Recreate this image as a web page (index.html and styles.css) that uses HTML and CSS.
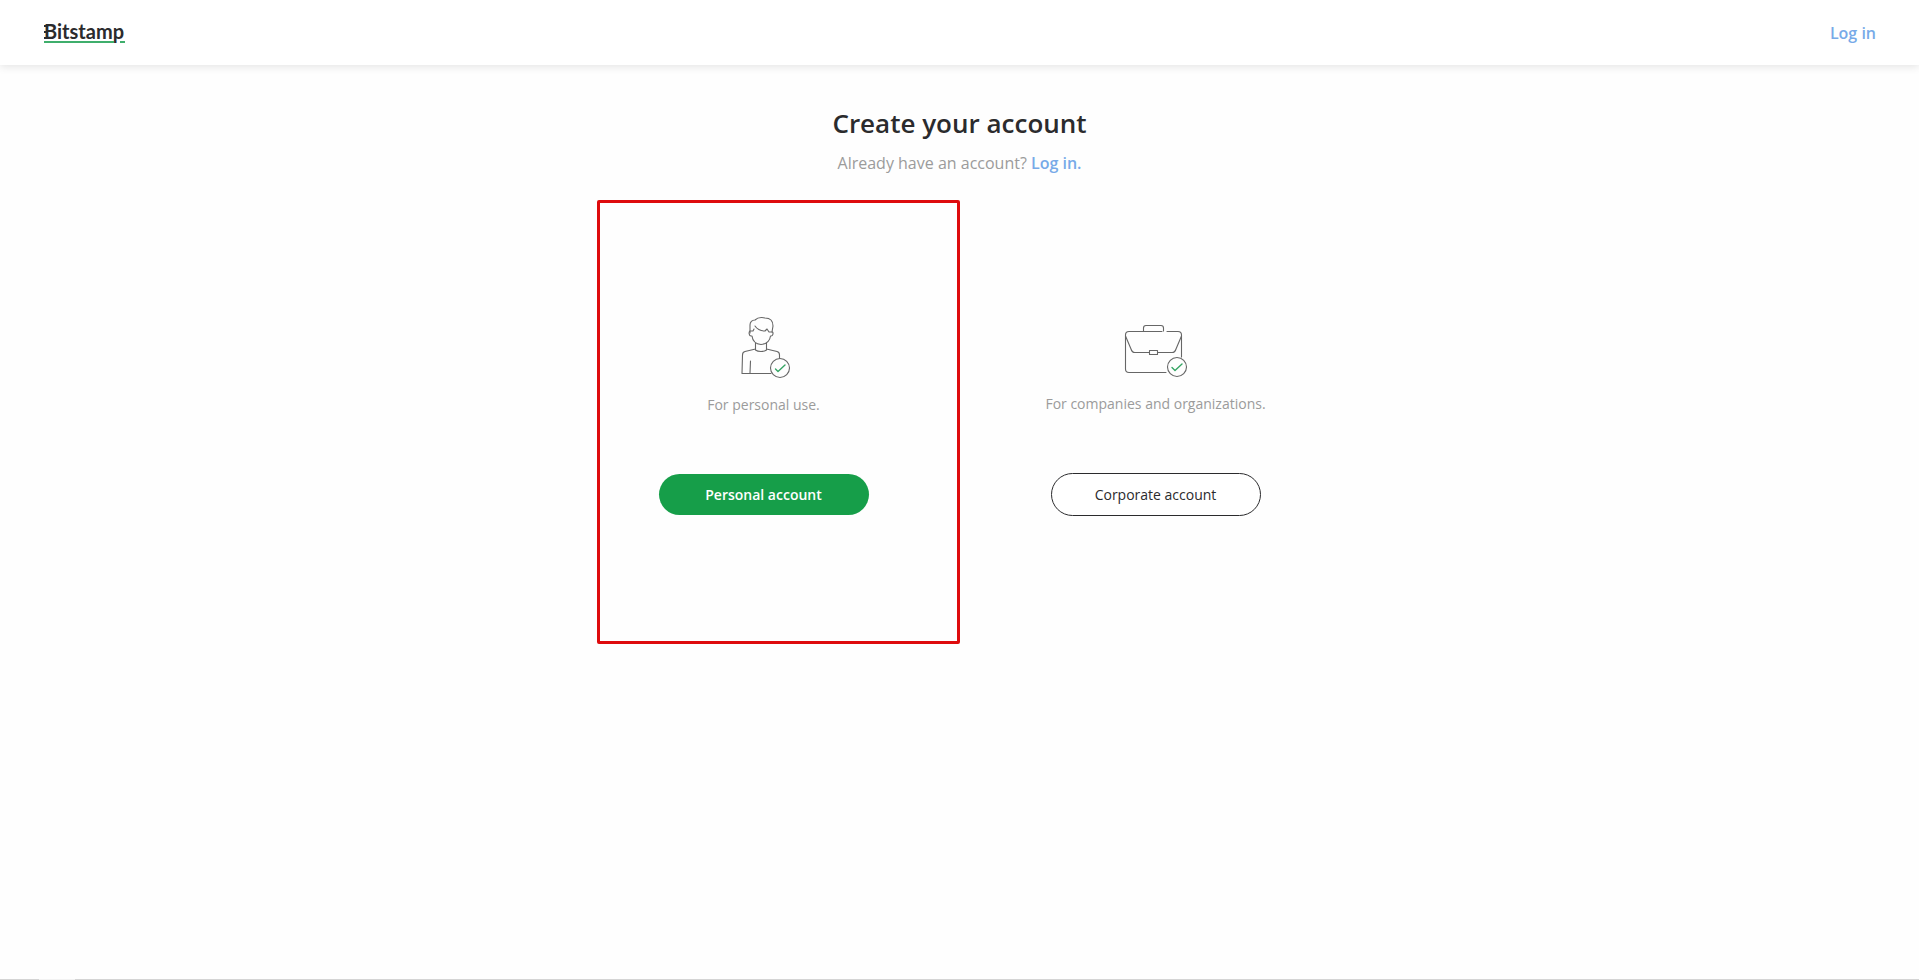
FILE: index.html
```html
<!DOCTYPE html>
<html lang="en">
<head>
<meta charset="utf-8">
<title>Create your account - Bitstamp</title>
<meta name="viewport" content="width=device-width, initial-scale=1">
<link rel="stylesheet" href="styles.css">
</head>
<body>
<header class="header">
  <a class="logo" href="#">Bitstamp
    <svg class="logo-mark" viewBox="0 0 81 20" aria-hidden="true"><path d="M0 3H3M0 9H4M0 15H3" stroke="#2b2b2d" stroke-width="2"/><path d="M0 19H70M76 19H81" stroke="#3fae6c" stroke-width="2"/></svg>
  </a>
  <a class="link" href="#">Log in</a>
</header>
<main class="main">
  <h1 class="title">Create your account</h1>
  <p class="subtitle">Already have an account? <a class="link" href="#">Log in.</a></p>
  <div class="options">
    <div class="highlight"></div>
    <section class="option">
      <svg class="icon" viewBox="0 0 60 64" fill="none" stroke="#666" stroke-width="1.100" stroke-linecap="round" stroke-linejoin="round" aria-hidden="true">
        <path d="M16 18V10C16 7 18 5 21 5C23 3 27 2 31 3C37 3 39 7 39 11L38 17"/>
        <path d="M21 11C23 14 26 16 31 16L33 14L35 17H38.500C39.500 18 39 21 37 21H36.500C36 25 33 29 27 29.500C21 29 18.500 25 18 21H17C15 21 14.500 17 16 16H19L20 14"/>
        <path d="M21.500 28V35C24 37 30 37 32.500 35V28M21.500 34L11 36.500C9 37 8.500 38 8.500 40L8 58.500H37M32.500 34L43 36.500C45 37 45.500 38 45.500 40V43M16.500 46L16 58"/>
        <circle cx="46" cy="53" r="9.500"/>
        <path d="M41.500 54L44 56.500L51 50" stroke="#35a564" stroke-width="1.400"/>
      </svg>
      <p class="note">For personal use.</p>
      <button class="button button-primary" type="button">Personal account</button>
    </section>
    <section class="option">
      <svg class="icon icon-case" viewBox="0 0 64 54" fill="none" stroke="#666" stroke-width="1.100" stroke-linecap="round" stroke-linejoin="round" aria-hidden="true">
        <path d="M42 48.500H5Q1.500 48.500 1.500 45V11Q1.500 7.500 5 7.500H38M43 7.500H54Q57.500 7.500 57.500 11V33"/>
        <path d="M19.500 7V4Q19.500 1.500 22 1.500H37Q39.500 1.500 39.500 4V7"/>
        <path d="M1.500 12L7 25Q8 28.500 11 28.500H25.500M33.500 28.500H48Q51 28.500 52 25L57.500 12"/>
        <rect x="25.500" y="26.500" width="8" height="4"/>
        <circle cx="53" cy="43" r="9.500"/>
        <path d="M48 43.500L51 46.500L58 40" stroke="#35a564" stroke-width="1.400"/>
      </svg>
      <p class="note">For companies and organizations.</p>
      <button class="button button-outline" type="button">Corporate account</button>
    </section>
  </div>
</main>
<footer class="footer"></footer>
</body>
</html>
```
FILE: styles.css
```css
* { box-sizing: border-box; }

body {
  margin: 0;
  min-height: 100vh;
  display: flex;
  flex-direction: column;
  background: #fefefe;
  color: #2b2b2d;
  font-family: "Open Sans", "Noto Sans", sans-serif;
}

.header {
  display: flex;
  align-items: center;
  justify-content: space-between;
  height: 65px;
  padding: 0 43px 0 44px;
  background: #fff;
  box-shadow: 0 2px 8px rgba(0, 0, 0, 0.1);
}

.logo {
  position: relative;
  padding-bottom: 4px;
  color: #2b2b2d;
  font-family: Lato, sans-serif;
  font-size: 20px;
  font-weight: 700;
  line-height: 24px;
  text-decoration: none;
}

.logo-mark {
  position: absolute;
  left: 0;
  top: 4px;
  width: 81px;
  height: 20px;
}

.link {
  color: #77aae8;
  font-weight: 600;
  text-decoration: none;
}

.main {
  flex: 1;
  display: flex;
  flex-direction: column;
  align-items: center;
  padding-top: 40px;
}

.title {
  margin: 0;
  font-size: 26px;
  font-weight: 600;
  line-height: 36px;
}

.subtitle {
  margin: 10px 0 0;
  color: #9b9b9b;
  font-size: 16px;
  line-height: 24px;
}

.options {
  position: relative;
  display: grid;
  grid-template-columns: 1fr 1fr;
  width: 100%;
  max-width: 784px;
  margin-top: 25px;
}

.highlight {
  position: absolute;
  top: 0;
  left: 29px;
  right: 50%;
  height: 444px;
  border: 3px solid #de0b0d;
  border-radius: 2px;
  pointer-events: none;
}

.option {
  display: flex;
  flex-direction: column;
  align-items: center;
  padding-top: 115px;
}

.icon {
  width: 60px;
  height: 64px;
}

.icon-case {
  width: 64px;
  height: 54px;
  margin-top: 9px;
}

.note {
  margin: 15px 0 0;
  color: #9b9b9b;
  font-size: 14px;
  line-height: 22px;
}

.button {
  width: 210px;
  height: 41px;
  margin-top: 58px;
  border: 0;
  border-radius: 22px;
  font-family: inherit;
  font-size: 14px;
  font-weight: 600;
}

.button-primary {
  background: #169e49;
  color: #fff;
}

.button-outline {
  height: 43px;
  border: 1px solid #2b2b2d;
  background: #fff;
  color: #2b2b2d;
  font-weight: 500;
}

.footer {
  height: 1px;
  background: linear-gradient(90deg, #d4d4d4 39px, #f2f2f2 39px 75px, #d4d4d4 75px);
}
```
